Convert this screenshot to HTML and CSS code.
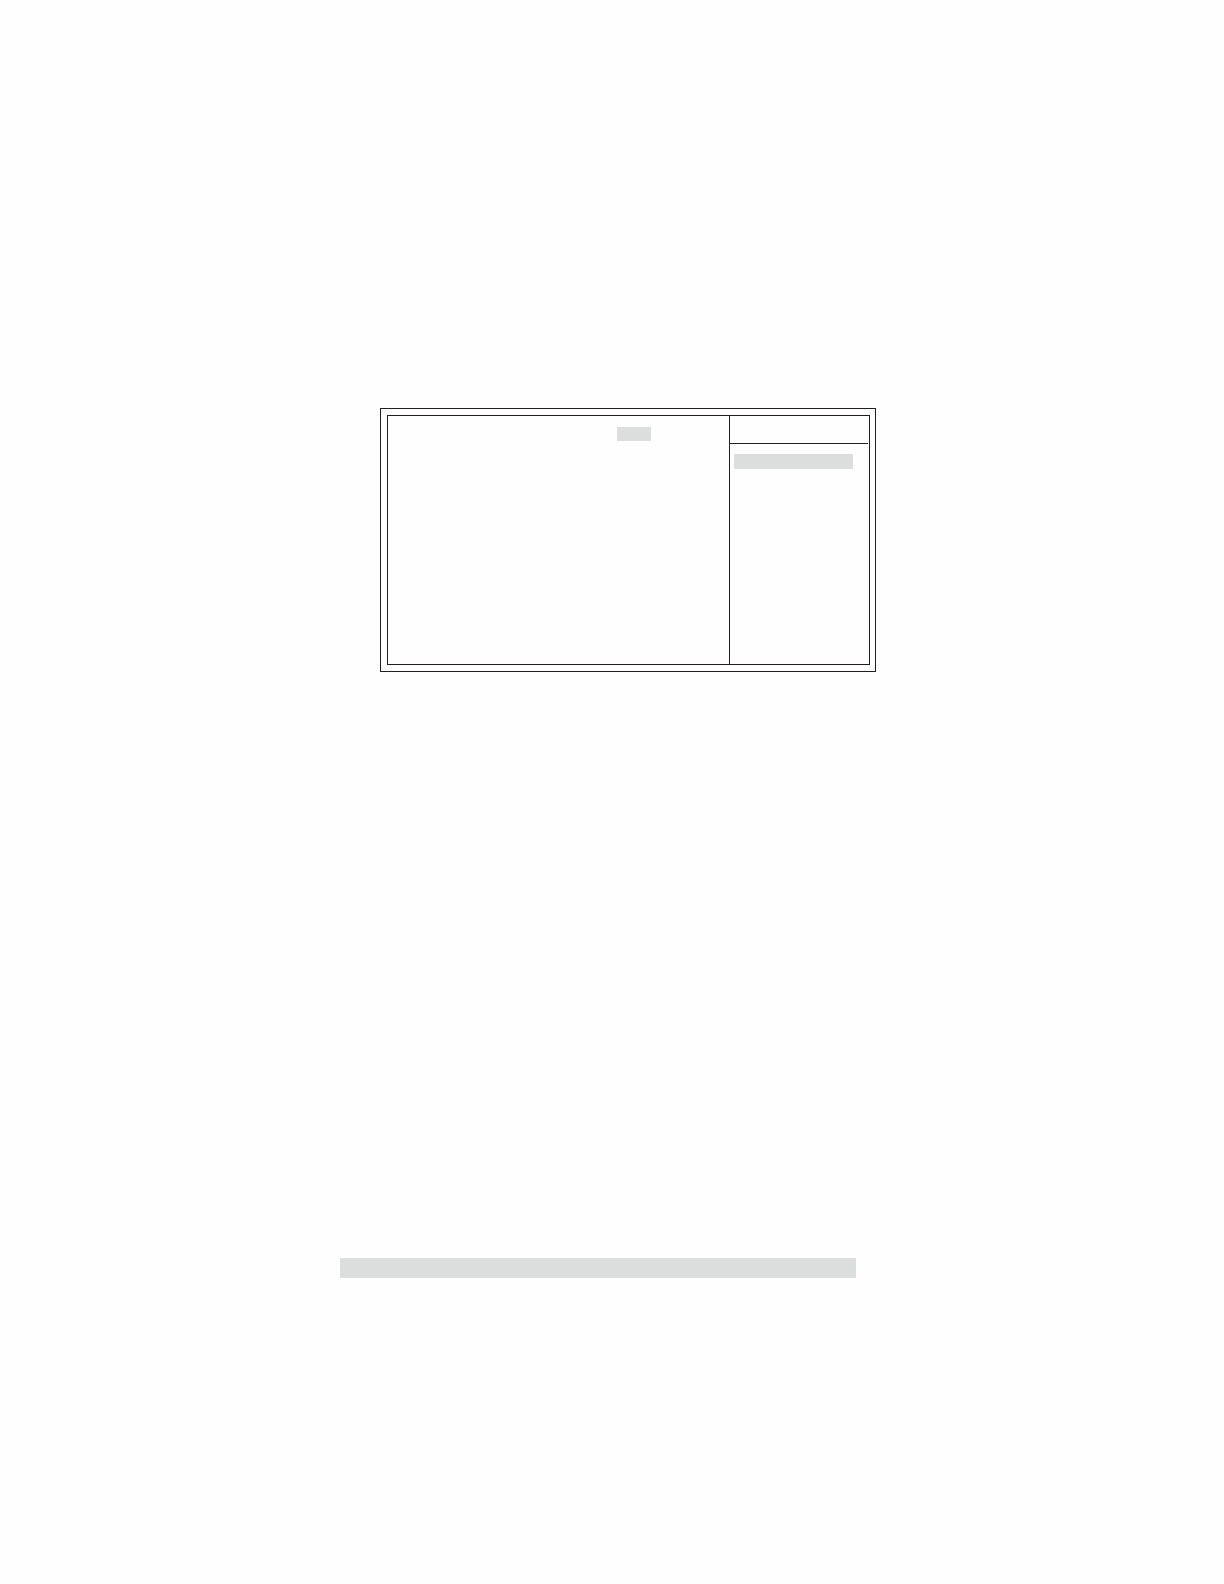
FILE: index.html
```html
<!DOCTYPE html>
<html lang="en">
<head>
  <meta charset="UTF-8">
  <meta name="viewport" content="width=device-width, initial-scale=1.0">
  <title>Setup</title>
  <link rel="stylesheet" href="styles.css">
</head>

<body>
  <main class="page">
    <!-- Setup screen with double frame -->
    <section class="screen">
      <div class="panel">
        <div class="settings">
          <div class="value"></div>
        </div>
        <aside class="help">
          <div class="help-header"></div>
          <div class="help-body">
            <div class="help-item"></div>
          </div>
        </aside>
      </div>
    </section>

    <!-- Section bar -->
    <div class="section-bar"></div>
  </main>
</body>

</html>
```

FILE: styles.css
```css
* {
  box-sizing: border-box;
}

body {
  margin: 0;
  font-family: "Liberation Sans", Arial, sans-serif;
  background-color: #fefefe;
  color: #231f20;
}

.page {
  display: grid;
  grid-template-columns: 340fr 536fr 348fr;
  row-gap: 586px;
  padding: 408px 0 306px;
}

/* Setup screen */
.screen {
  grid-column: 2;
  margin-left: 40px;
  padding: 6px 5px 6px 6px;
  border: 1px solid #231f20;
}

.panel {
  display: grid;
  grid-template-columns: 341fr 140fr;
  min-height: 250px;
  border: 1px solid #231f20;
}

.settings {
  display: flex;
  justify-content: flex-end;
  align-items: flex-start;
  padding: 11px 78px 0 0;
}

.value {
  width: 34px;
  height: 14px;
  background-color: #dcdddd;
}

/* Help column */
.help {
  border-left: 1px solid #231f20;
}

.help-header {
  height: 28px;
  margin-right: 1px;
  border-bottom: 1px solid #231f20;
}

.help-body {
  padding: 10px 16px 0 4px;
}

.help-item {
  height: 15px;
  border-radius: 1px;
  background-color: #dcdddd;
}

/* Section bar */
.section-bar {
  grid-column: 2;
  height: 20px;
  margin-right: 20px;
  background-color: #dcdddd;
}
```
